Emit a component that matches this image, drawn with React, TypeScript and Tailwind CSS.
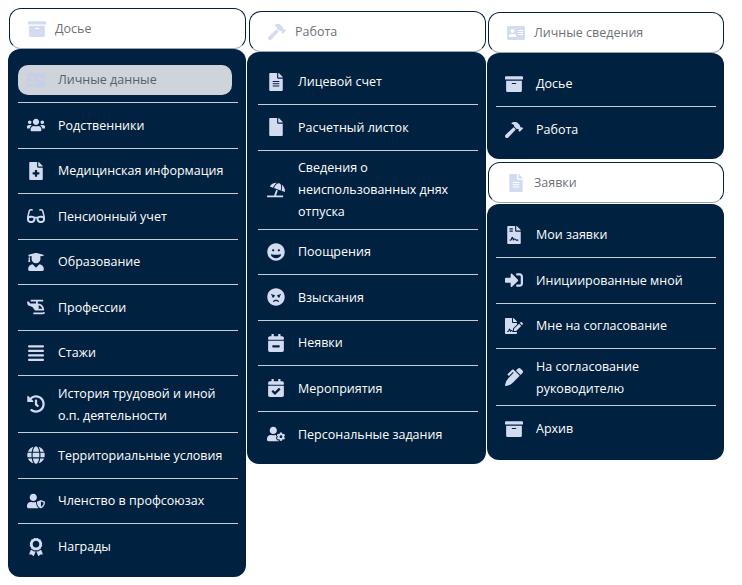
import type { ReactNode } from 'react'
import type { IconType } from 'react-icons'
import {
  FaAddressCard,
  FaAlignJustify,
  FaAngry,
  FaArchive,
  FaAward,
  FaCalendarCheck,
  FaCalendarMinus,
  FaFile,
  FaFileAlt,
  FaFileContract,
  FaFileMedical,
  FaFileSignature,
  FaGlasses,
  FaGlobe,
  FaGrin,
  FaHammer,
  FaHelicopter,
  FaHistory,
  FaPenAlt,
  FaSignInAlt,
  FaUmbrellaBeach,
  FaUserCog,
  FaUserGraduate,
  FaUserShield,
  FaUsers,
} from 'react-icons/fa'

interface MenuItem {
  label: ReactNode
  icon: IconType
  active?: boolean
}

const dossier: MenuItem[] = [
  { label: 'Личные данные', icon: FaAddressCard, active: true },
  { label: 'Родственники', icon: FaUsers },
  { label: 'Медицинская информация', icon: FaFileMedical },
  { label: 'Пенсионный учет', icon: FaGlasses },
  { label: 'Образование', icon: FaUserGraduate },
  { label: 'Профессии', icon: FaHelicopter },
  { label: 'Стажи', icon: FaAlignJustify },
  { label: <>История трудовой и иной<br />о.п. деятельности</>, icon: FaHistory },
  { label: 'Территориальные условия', icon: FaGlobe },
  { label: 'Членство в профсоюзах', icon: FaUserShield },
  { label: 'Награды', icon: FaAward },
]

const work: MenuItem[] = [
  { label: 'Лицевой счет', icon: FaFileAlt },
  { label: 'Расчетный листок', icon: FaFile },
  { label: <>Сведения о<br />неиспользованных днях<br />отпуска</>, icon: FaUmbrellaBeach },
  { label: 'Поощрения', icon: FaGrin },
  { label: 'Взыскания', icon: FaAngry },
  { label: 'Неявки', icon: FaCalendarMinus },
  { label: 'Мероприятия', icon: FaCalendarCheck },
  { label: 'Персональные задания', icon: FaUserCog },
]

const personal: MenuItem[] = [
  { label: 'Досье', icon: FaArchive },
  { label: 'Работа', icon: FaHammer },
]

const requests: MenuItem[] = [
  { label: 'Мои заявки', icon: FaFileContract },
  { label: 'Инициированные мной', icon: FaSignInAlt },
  { label: 'Мне на согласование', icon: FaFileSignature },
  { label: <>На согласование<br />руководителю</>, icon: FaPenAlt },
  { label: 'Архив', icon: FaArchive },
]

function Header({ icon: Icon, title }: { icon: IconType; title: string }) {
  return (
    <div className="flex h-[41px] items-center rounded-xl border border-[#012140] border-b-[#9aa5b1] bg-white pl-[9px]">
      <span className="flex w-9 shrink-0 justify-center">
        <Icon className="h-[18px] w-auto text-[#d3dbf1]" />
      </span>
      <span className="pt-px text-[12.5px] leading-[22px] text-[#6d7278]">{title}</span>
    </div>
  )
}

function Menu({ items, className }: { items: MenuItem[]; className: string }) {
  return (
    <div className={`rounded-xl bg-[#012140] pr-2 ${className}`}>
      {items.map(({ label, icon: Icon, active }, i) => (
        <div
          key={i}
          className={`flex min-h-[45.5px] items-center py-[5.5px] ${i < items.length - 1 ? 'border-b border-[#c9ced6]' : ''}`}
        >
          {active ? (
            <div className="mr-[6px] flex h-[30px] flex-1 items-center rounded-[10px] bg-[#cfd4da]">
              <span className="flex w-10 shrink-0 justify-center pr-1">
                <Icon className="h-[18px] w-auto text-[#c6cfe6]" />
              </span>
              <span className="pt-px text-[12.5px] leading-[22px] text-[#56616d]">{label}</span>
            </div>
          ) : (
            <>
              <span className="flex w-10 shrink-0 justify-center pr-1">
                <Icon className="h-[18px] w-auto text-[#d3dbf1]" />
              </span>
              <span className="pt-px text-[12.5px] leading-[22px] text-white">{label}</span>
            </>
          )}
        </div>
      ))}
    </div>
  )
}

export default function App() {
  return (
    <div className="flex min-h-[585px] items-start bg-white pl-2 font-['Open_Sans','Noto_Sans',sans-serif]">
      <div className="flex w-[238px] flex-col pt-2">
        <div className="ml-px">
          <Header icon={FaArchive} title="Досье" />
        </div>
        <Menu items={dossier} className="pt-[8.5px] pb-[7.5px] pl-[10px]" />
      </div>
      <div className="ml-px flex w-[239px] flex-col pt-[11px]">
        <div className="ml-[2px]">
          <Header icon={FaHammer} title="Работа" />
        </div>
        <Menu items={work} className="pt-[7.5px] pb-[6.5px] pl-[11px]" />
      </div>
      <div className="ml-px flex w-[237px] flex-col pt-3">
        <div className="ml-px">
          <Header icon={FaAddressCard} title="Личные сведения" />
        </div>
        <Menu items={personal} className="pt-[8.5px] pb-[6.5px] pl-[9px]" />
        <div className="mt-[3px] mb-px ml-px">
          <Header icon={FaFileAlt} title="Заявки" />
        </div>
        <Menu items={requests} className="pt-[8.5px] pb-[8.5px] pl-[9px]" />
      </div>
    </div>
  )
}
